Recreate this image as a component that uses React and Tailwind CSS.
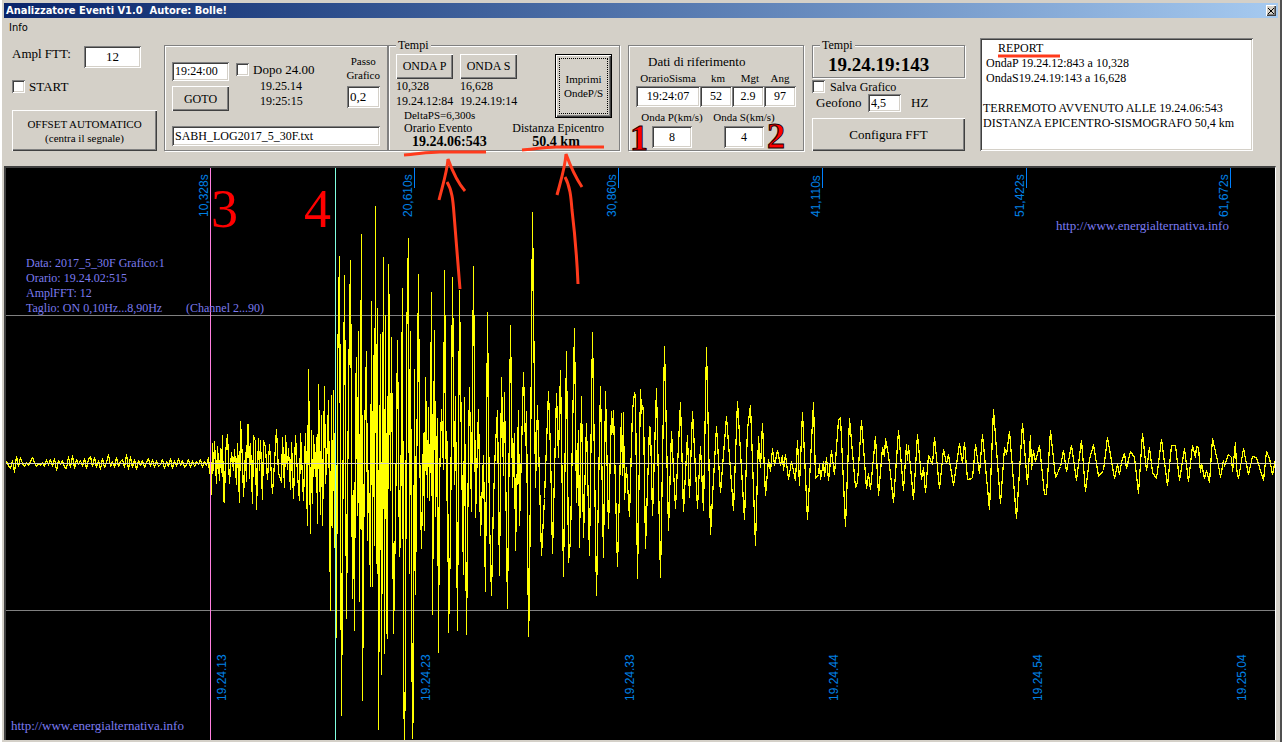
import React from "react";

const SUNKEN =
  "bg-white shadow-[inset_1px_1px_0_#808080,inset_-1px_-1px_0_#ffffff,inset_2px_2px_0_#404040,inset_-2px_-2px_0_#d4d0c8]";
const RAISED =
  "bg-[#d4d0c8] shadow-[inset_1px_1px_0_#ffffff,inset_-1px_-1px_0_#404040,inset_-2px_-2px_0_#808080]";
const ETCHED =
  "border border-[#808080] shadow-[1px_1px_0_#ffffff,inset_1px_1px_0_#ffffff]";

// Background noise before the P wave, one sample every 2px from x=6
const NOISE = [
  461, 465, 468, 460, 472, 456, 466, 457, 463, 466, 462, 465, 461, 457, 462,
  466, 463, 465, 462, 466, 459, 465, 459, 466, 458, 470, 460, 464, 460, 467,
  468, 456, 467, 455, 468, 459, 464, 460, 466, 458, 468, 459, 456, 466, 457,
  467, 460, 469, 458, 467, 462, 454, 466, 461, 467, 457, 466, 461, 459, 467,
  454, 469, 456, 467, 459, 469, 460, 465, 460, 467, 462, 458, 466, 459, 467,
  460, 466, 464, 459, 468, 461, 466, 458, 468, 460, 466, 458, 465, 460, 467,
  464, 459, 467, 460, 466, 461, 464, 459, 467, 461, 465,
];

const WAVE_P =
  "208,457 209,473 210,455 211,494 212,443 213,470 214,441 216,483 217,446 219,480 220,448 221,472 222,435 223,500 224,502 225,453 227,434 229,483 231,452 233,470 234,449 236,484 237,443 239,502 240,421 242,460 243,496 245,452 246,481 247,424 248,424 249,478 250,443 252,503 253,435 255,441 256,509 258,438 259,470 260,440 262,499 263,440 265,447 267,479 269,444 272,493 274,462 276,429 278,472 281,482 282,437 284,487 285,435 287,469 288,448 290,489 291,442 293,498 295,435 297,474 299,500 300,433 303,500 305,433 307,525 308,369 310,533 311,430 312,503 313,435 315,476 316,437 317,523 318,384 320,514 321,415 322,525 324,386 325,483 327,440 328,400 330,610 331,395 332,527 333,390 334,547";

const WAVE_S =
  "335,370 336,637 337,370 339,256 341,715 343,405 344,275 346,618 348,390 350,260 352,598 353,490 354,630 355,399 356,357 357,515 358,331 359,601 361,234 362,700 363,568 364,437 366,351 367,540 368,470 370,586 371,301 372,586 373,355 374,545 375,206 376,563 377,308 378,729 380,334 381,674 383,257 384,653 385,315 386,626 387,638 388,264 389,340 390,490 391,337 393,633 395,520 397,340 399,556 400,534 402,288 403,682 404,740 405,665 406,345 408,238 409,573 410,331 411,585 412,738 413,700 414,369 415,594 418,274 419,445 421,548 423,433 424,530 425,377 427,497 428,407 429,500 430,430 431,292 432,614 434,330 435,516 437,418 438,652 439,480 441,409 443,469 444,270 446,500 447,441 448,632 450,541 452,277 454,484 455,396 457,630 459,290 461,450 463,574 464,397 466,634 468,450 469,387 471,511 473,266 475,517 478,409 480,535 483,455 485,591 487,312 489,520 491,595 493,500 495,444 497,410 499,575 501,377 503,475 504,392 507,608 510,325 512,487 514,433 515,550 518,410 519,525 521,450 523,372 525,445 526,411 528,636 529,597 532,212 535,487 537,405 541,555 544,498 548,391 550,450 552,553 556,393 558,457 560,370 563,576 566,351 568,562 570,540 574,328 576,502 578,430 579,547 581,396 583,537 586,423 589,555 592,332 596,595";

const WAVE_CODA =
  "600,386 603,557 605,391 608,528 611,411 612,432 613,410 617,566 621,413 622,475 623,412 624,499 626,467 629,516 632,410 634,392 635,397 637,578 640,389 641,413 642,405 643,410 645,548 649,426 650,427 652,515 656,388 660,577 664,346 668,530 671,431 675,508 680,402 683,511 687,435 689,497 692,411 697,508 700,446 703,510 706,347 710,534 712,497 716,426 720,492 726,416 733,510 737,401 744,519 747,428 750,405 755,545 758,436 760,467 762,423 765,495 768,459 770,471 772,448 774,465 777,450 780,465 782,455 783,470 785,454 788,479 791,461 795,480 797,440 799,485 802,412 807,519 813,402 815,478 818,474 819,464 820,479 823,461 824,476 826,457 828,480 831,450 834,474 838,420 840,417 845,526 849,418 855,487 857,482 861,420 866,488 868,473 870,489 875,436 878,495 882,447 884,456 885,438 888,455 893,502 898,430 903,490 906,444 907,460 908,445 913,499 917,434 921,479 923,467 925,492 928,455 932,464 934,437 939,488 943,449 946,463 948,454 953,485 959,443 962,463 964,442 967,479 972,478 975,444 979,473 982,434 989,509 993,409 1000,503 1004,447 1006,454 1009,431 1016,518 1022,423 1027,484 1030,435 1031,469 1033,450 1035,461 1039,445 1044,494 1046,494 1050,430 1055,477 1060,466 1063,450 1066,471 1071,445 1076,480 1081,440 1085,491 1089,459 1093,444 1098,476 1103,470 1107,437 1114,478 1117,464 1119,474 1121,462 1124,453 1126,468 1130,451 1134,457 1138,493 1142,433 1146,470 1149,447 1152,472 1156,478 1161,439 1167,485 1171,445 1175,445 1179,480 1184,448 1188,481 1192,445 1195,457 1196,446 1198,447 1200,472 1201,463 1204,478 1206,470 1209,482 1212,438 1218,465 1220,477 1223,460 1224,466 1228,454 1231,457 1232,471 1235,442 1236,468 1238,478 1243,448 1248,474 1252,456 1256,457 1263,480 1266,451 1269,458 1272,474 1275,459";

const TRACE = [
  NOISE.map((y, i) => `${6 + i * 2},${y}`).join(" "),
  WAVE_P,
  WAVE_S,
  WAVE_CODA,
].join(" ");

const TICKS = [
  { x: 208, top: "10,328s", bottom: "19.24.13" },
  { x: 412, top: "20,610s", bottom: "19.24.23" },
  { x: 616, top: "30,860s", bottom: "19.24.33" },
  { x: 820, top: "41,110s", bottom: "19.24.44" },
  { x: 1024, top: "51,422s", bottom: "19.24.54" },
  { x: 1228, top: "61,672s", bottom: "19.25.04" },
];

const INFO = [
  "Data: 2017_5_30F Grafico:1",
  "Orario: 19.24.02:515",
  "AmplFFT: 12",
  "Taglio: ON 0,10Hz...8,90Hz",
];

function TextBox({ className, ...props }) {
  return <input type="text" className={`${SUNKEN} ${className}`} {...props} />;
}

function Button({ className, children }) {
  return (
    <button type="button" className={`${RAISED} ${className}`}>
      {children}
    </button>
  );
}

function CheckBox({ id }) {
  return (
    <input
      id={id}
      type="checkbox"
      className={`${SUNKEN} h-[13px] w-[13px] shrink-0 appearance-none`}
    />
  );
}

function TitleBar() {
  return (
    <header className="flex h-[15px] items-center justify-between bg-linear-to-r from-[#0a246a] to-[#a6caf0] pr-0.5 pl-0.5">
      <h1 className="font-['DejaVu_Sans_Condensed','DejaVu_Sans',sans-serif] text-[11px] leading-[15px] font-bold whitespace-pre text-white">
        {"Analizzatore Eventi V1.0  Autore: Bolle!"}
      </h1>
      <button
        type="button"
        aria-label="Chiudi"
        className={`${RAISED} flex h-[11px] w-[10px] items-center justify-center`}
      >
        <svg width="6" height="6" viewBox="0 0 6 6" stroke="#000">
          <path d="M0 0L6 6M6 0L0 6" />
        </svg>
      </button>
    </header>
  );
}

function AmplPanel() {
  return (
    <div className="w-[145px] shrink-0 pt-2">
      <div className="flex justify-between pr-4">
        <label htmlFor="ampl" className="text-[13px] leading-4">
          Ampl FTT:
        </label>
        <TextBox
          id="ampl"
          defaultValue="12"
          className="h-[22px] w-[57px] text-center text-[13px]"
        />
      </div>
      <div className="mt-3 flex h-[13px] items-center gap-1">
        <CheckBox id="start" />
        <label htmlFor="start" className="text-[13px]">
          START
        </label>
      </div>
      <Button className="mt-[17px] block h-[41px] w-full text-[11px] leading-[14px]">
        OFFSET AUTOMATICO
        <br />
        (centra il segnale)
      </Button>
    </div>
  );
}

function FilePanel() {
  return (
    <div className={`${ETCHED} mt-[7px] ml-[7px] h-[106px] w-56 shrink-0 px-[7px] pt-2`}>
      <div className="flex">
        <div className="mt-2 flex flex-col gap-[5px]">
          <TextBox
            aria-label="Ora"
            defaultValue="19:24:00"
            className="h-[19px] w-[57px] px-[3px] text-[12px]"
          />
          <Button className="h-[25px] w-[57px] text-[12px]">GOTO</Button>
        </div>
        <div className="mt-2 ml-[7px]">
          <div className="mb-0.5 flex h-[15px] items-center gap-1">
            <CheckBox id="dopo" />
            <label htmlFor="dopo" className="text-[13px]">
              Dopo 24.00
            </label>
          </div>
          <p className="pl-6 text-[12px] leading-[15px]">19.25.14</p>
          <p className="pl-6 text-[12px] leading-[15px]">19:25:15</p>
        </div>
        <div className="ml-auto flex flex-col items-end">
          <label
            htmlFor="passo"
            className="text-center text-[11px] leading-[14px]"
          >
            Passo
            <br />
            Grafico
          </label>
          <TextBox
            id="passo"
            defaultValue="0,2"
            className="mt-1 h-[22px] w-[33px] px-[3px] text-[13px]"
          />
        </div>
      </div>
      <TextBox
        aria-label="File"
        defaultValue="SABH_LOG2017_5_30F.txt"
        className="mt-[15px] h-5 w-full px-[3px] text-[12px]"
      />
    </div>
  );
}

function Onda({ name, seconds, time }) {
  return (
    <div className="w-[57px] text-[12px] leading-[15px] whitespace-nowrap">
      <Button className="h-[25px] w-full">{name}</Button>
      <p>{seconds}</p>
      <p>{time}</p>
    </div>
  );
}

function TempiPanel() {
  return (
    <fieldset className={`${ETCHED} h-[113px] w-[232px] shrink-0 px-[7px]`}>
      <legend className="bg-[#d4d0c8] px-0.5 text-[12px] leading-[14px]">
        Tempi
      </legend>
      <div className="flex justify-between pt-0.5">
        <div>
          <div className="flex gap-[7px]">
            <Onda name="ONDA P" seconds="10,328" time="19.24.12:84" />
            <Onda name="ONDA S" seconds="16,628" time="19.24.19:14" />
          </div>
          <p className="pl-2 text-[11px] leading-[13px]">DeltaPS=6,300s</p>
        </div>
        <button
          type="button"
          className="h-[64px] w-[57px] border border-black bg-[#d4d0c8] p-[3px] text-[11px] leading-[14px] shadow-[inset_1px_1px_0_#ffffff,inset_-1px_-1px_0_#404040,inset_-2px_-2px_0_#808080]"
        >
          <span className="flex h-full items-center justify-center border border-dotted border-black">
            Imprimi
            <br />
            OndeP/S
          </span>
        </button>
      </div>
      <div className="flex justify-between pr-2 pl-2 text-[12px] leading-[13px]">
        <div>
          <p>Orario Evento</p>
          <p className="pl-2 text-[14px] leading-[14px] font-bold">
            19.24.06:543
          </p>
        </div>
        <div>
          <p>Distanza Epicentro</p>
          <p className="pl-5 text-[14px] leading-[14px] font-bold">50,4 km</p>
        </div>
      </div>
    </fieldset>
  );
}

function RiferimentoPanel() {
  return (
    <div
      className={`${ETCHED} mt-[7px] ml-2 h-[106px] w-[176px] shrink-0 px-[7px] pt-2`}
    >
      <p className="pl-3 text-[13px] leading-4">Dati di riferimento</p>
      <div className="grid grid-cols-[64px_32px_32px_32px] text-center text-[11px] leading-4">
        <label htmlFor="sisma">OrarioSisma</label>
        <label htmlFor="km" className="pl-1">
          km
        </label>
        <label htmlFor="mgt" className="pl-1">
          Mgt
        </label>
        <label htmlFor="ang">Ang</label>
        <TextBox id="sisma" defaultValue="19:24:07" className="h-[21px] w-full text-center text-[12px]" />
        <TextBox id="km" defaultValue="52" className="h-[21px] w-full text-center text-[12px]" />
        <TextBox id="mgt" defaultValue="2.9" className="h-[21px] w-full text-center text-[12px]" />
        <TextBox id="ang" defaultValue="97" className="h-[21px] w-full text-center text-[12px]" />
      </div>
      <div className="mt-[3px] grid grid-cols-[72px_72px] justify-items-center text-[11px] leading-[14px]">
        <label htmlFor="vp">Onda P(km/s)</label>
        <label htmlFor="vs">Onda S(km/s)</label>
        <TextBox id="vp" defaultValue="8" className="mt-0.5 h-[22px] w-10 text-center text-[12px]" />
        <TextBox id="vs" defaultValue="4" className="mt-0.5 h-[22px] w-10 text-center text-[12px]" />
      </div>
    </div>
  );
}

function ConfigPanel() {
  return (
    <div className="ml-2 w-[153px] shrink-0">
      <fieldset className={`${ETCHED} px-[7px]`}>
        <legend className="bg-[#d4d0c8] px-0.5 text-[12px] leading-[14px]">
          Tempi
        </legend>
        <p className="pl-2 text-[19px] leading-[25px] font-bold">
          19.24.19:143
        </p>
      </fieldset>
      <div className="mt-0.5 flex h-[13px] items-center gap-[5px]">
        <CheckBox id="salva" />
        <label htmlFor="salva" className="text-[12px]">
          Salva Grafico
        </label>
      </div>
      <div className="mt-px flex h-[18px] items-center pl-1 text-[13px]">
        <label htmlFor="geofono" className="w-[52px]">
          Geofono
        </label>
        <TextBox
          id="geofono"
          defaultValue="4,5"
          className="h-[18px] w-[33px] px-[3px] text-[12px]"
        />
        <span className="pl-[10px]">HZ</span>
      </div>
      <Button className="mt-1.5 block h-[33px] w-full text-[13px]">
        Configura FFT
      </Button>
    </div>
  );
}

const REPORT = `     REPORT
 OndaP 19.24.12:843 a 10,328
 OndaS19.24.19:143 a 16,628

TERREMOTO AVVENUTO ALLE 19.24.06:543
DISTANZA EPICENTRO-SISMOGRAFO 50,4 km`;

function Seismogram() {
  return (
    <div className="border-t-2 border-r border-l-2 border-t-[#404040] border-r-white border-l-[#404040] bg-black">
      <svg viewBox="6 168 1269 572" className="block h-auto w-full">
        <g shapeRendering="crispEdges" fill="none">
          <path d="M6 315.5H1275M6 610.5H1275" stroke="#808080" />
          <polyline
            points={TRACE}
            stroke="#ffff00"
            strokeWidth="1.25"
            strokeLinejoin="bevel"
            transform="translate(0.5 0.5)"
          />
          <path d="M6 463.5H1275" stroke="#d4d0c8" />
          <path d="M210.5 168V740" stroke="#ff80e0" />
          <path d="M335.5 168V740" stroke="#80ffe0" />
          {TICKS.slice(1).map((t) => (
            <path key={t.x} d={`M${t.x + 2}.5 168V188`} stroke="#0080ff" />
          ))}
        </g>
        <g fill="#0080e6" fontFamily="'Liberation Sans', Arial, sans-serif" fontSize="12">
          {TICKS.map((t) => (
            <React.Fragment key={t.x}>
              <text transform={`translate(${t.x} 217) rotate(-90)`}>{t.top}</text>
              <text transform={`translate(${t.x + 18} 701) rotate(-90)`}>
                {t.bottom}
              </text>
            </React.Fragment>
          ))}
        </g>
        <g fill="#7b7bf0" fontFamily="'Liberation Serif', serif" fontSize="12">
          {INFO.map((line, i) => (
            <text key={line} x="26" y={267 + i * 15}>
              {line}
            </text>
          ))}
          <text x="186" y="312">
            (Channel 2...90)
          </text>
          <text x="1056" y="230" fontSize="13">
            http://www.energialternativa.info
          </text>
          <text x="11" y="730" fontSize="13">
            http://www.energialternativa.info
          </text>
        </g>
      </svg>
    </div>
  );
}

// Red pen marks drawn over the window
function Marks() {
  return (
    <svg
      width="1280"
      height="300"
      viewBox="2 0 1280 300"
      className="pointer-events-none absolute top-0 left-0"
    >
      <g fill="none" stroke="#ff3a1c" strokeWidth="3">
        <path d="M404 155C418 154 428 152 440 152H486" />
        <path d="M522 150C534 149 545 147 556 147H604" />
        <path d="M998 56H1060" />
        <path d="M439 200C443 184 447 172 448 159C452 170 458 183 465 191" />
        <path d="M447 182C452 190 453 200 454 214L460 289" />
        <path d="M557 195C561 180 565 168 566 154C570 165 576 178 582 187" />
        <path d="M565 177C570 186 571 197 572 210C575 235 577 260 578 284" />
      </g>
      <g fill="#ff0000" fontFamily="'Liberation Serif', serif">
        <g fontSize="54">
          <text x="211" y="227">
            3
          </text>
          <text x="304" y="227">
            4
          </text>
        </g>
        <g fontSize="36" fontWeight="bold" stroke="#200000" strokeWidth="1">
          <text x="630" y="150">
            1
          </text>
          <text x="767" y="148">
            2
          </text>
        </g>
      </g>
    </svg>
  );
}

export default function App() {
  return (
    <div className="relative border-r-2 border-l-2 border-r-[#505050] border-l-white bg-[#d4d0c8] pt-[3px] pr-0.5 pb-0.5 pl-0.5 font-['Liberation_Serif','Times_New_Roman',serif] text-black">
      <TitleBar />
      <nav className="flex h-5 items-center pl-[5px]">
        <button
          type="button"
          className="font-['DejaVu_Sans_Condensed','DejaVu_Sans',sans-serif] text-[11px]"
        >
          Info
        </button>
      </nav>
      <main className="pr-0.5">
        <div className="flex items-start pr-[23px] pb-[15px] pl-2">
          <AmplPanel />
          <FilePanel />
          <TempiPanel />
          <RiferimentoPanel />
          <ConfigPanel />
          <textarea
            aria-label="Report"
            defaultValue={REPORT}
            className={`${SUNKEN} ml-[15px] block h-[113px] min-w-0 flex-1 resize-none overflow-hidden px-[3px] py-[3px] text-[12px] leading-[15px]`}
          />
        </div>
        <Seismogram />
      </main>
      <Marks />
    </div>
  );
}
